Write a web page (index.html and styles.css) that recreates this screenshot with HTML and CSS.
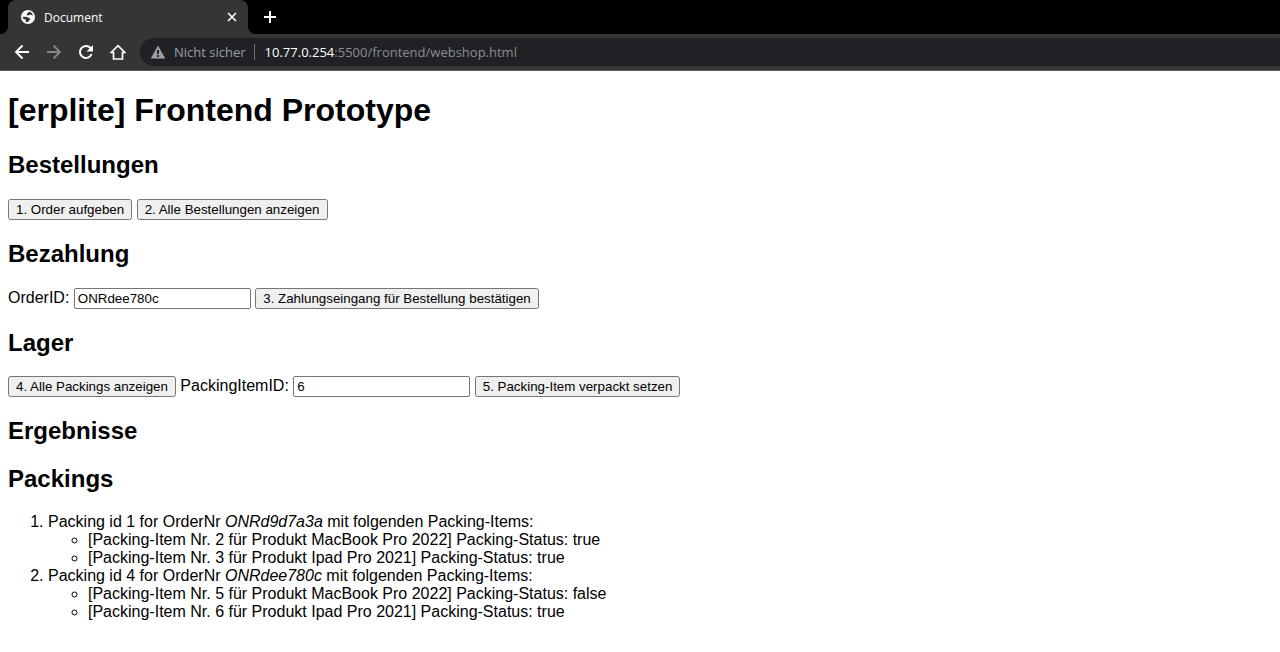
FILE: index.html
```
<!DOCTYPE html>
<html lang="de">
<head>
<meta charset="utf-8">
<title>Document</title>
<link rel="stylesheet" href="styles.css">
</head>
<body>
<header class="browser">
  <div class="tabs">
    <div class="tab">
      <svg class="icon" viewBox="0 0 16 16" width="16" height="16" aria-hidden="true"><circle cx="8" cy="8" r="7" fill="#fff"/><path d="M8.500 2.800C10.500 2.600 12.400 4 13 6.200C11.600 6.600 11 5.200 9.800 5.800C8.600 6.300 8.200 6.600 7.200 6.200C6.300 5.700 6.800 4.500 7.800 4.300Z" fill="#353535"/><path d="M2.700 8C4.500 7.700 7.500 7.800 8.200 8.600C8.900 9.400 10.200 9.200 10.300 10.300C10.300 11.300 8.900 11.200 8.600 12.200L8 13.200C6.800 13.200 6 12.900 5.600 12.600C6.200 11.200 5.800 10.400 4.600 10.300C3.400 10.200 2.900 9.400 2.700 8Z" fill="#353535"/></svg>
      <span class="tab-title">Document</span>
      <button class="tool" aria-label="Tab schließen"><svg class="icon" viewBox="0 0 16 16" width="16" height="16"><path d="M4 4l8 8M12 4l-8 8" stroke="#fff" stroke-width="1.600"/></svg></button>
    </div>
    <button class="tool new-tab" aria-label="Neuer Tab"><svg class="icon" viewBox="0 0 16 16" width="16" height="16"><path d="M8 2v12M2 8h12" stroke="#fff" stroke-width="2"/></svg></button>
  </div>
  <nav class="toolbar">
    <button class="tool" aria-label="Zurück"><svg class="icon" viewBox="0 0 16 16" width="16" height="16"><path d="M15 8H2M8.500 1.500L2 8l6.500 6.500" fill="none" stroke="#fff" stroke-width="1.800"/></svg></button>
    <button class="tool" aria-label="Vorwärts"><svg class="icon" viewBox="0 0 16 16" width="16" height="16"><path d="M1 8h13M7.500 1.500L14 8l-6.500 6.500" fill="none" stroke="#868686" stroke-width="1.800"/></svg></button>
    <button class="tool" aria-label="Neu laden"><svg class="icon" viewBox="0 0 16 16" width="16" height="16"><path d="M13.600 10A6 6 0 1 1 12.500 4L13 4.600" fill="none" stroke="#fff" stroke-width="2"/><path d="M15 1v6.500H8.500Z" fill="#fff"/></svg></button>
    <button class="tool" aria-label="Startseite"><svg class="icon" viewBox="0 0 16 16" width="16" height="16"><path d="M3.500 8.500H1.200L8 1.600l6.800 6.900H12.500V15h-9Z" fill="none" stroke="#fff" stroke-width="1.700"/></svg></button>
    <div class="address">
      <svg class="icon" viewBox="0 0 16 16" width="16" height="16" aria-hidden="true"><path d="M8 1.500L15.300 14.500H.700Z" fill="#9aa0a6"/><path d="M8 6v4M8 11v2" stroke="#202124" stroke-width="2"/></svg>
      <span class="insecure">Nicht sicher</span>
      <span class="url"><span class="host">10.77.0.254</span>:5500/frontend/webshop.html</span>
    </div>
  </nav>
</header>
<main class="page">
  <h1>[erplite] Frontend Prototype</h1>
  <h2>Bestellungen</h2>
  <button>1. Order aufgeben</button>
  <button>2. Alle Bestellungen anzeigen</button>
  <h2>Bezahlung</h2>
  <label for="order-id">OrderID:</label>
  <input class="field" type="text" id="order-id" value="ONRdee780c">
  <button>3. Zahlungseingang für Bestellung bestätigen</button>
  <h2>Lager</h2>
  <button>4. Alle Packings anzeigen</button>
  <label for="item-id">PackingItemID:</label>
  <input class="field" type="text" id="item-id" value="6">
  <button>5. Packing-Item verpackt setzen</button>
  <h2>Ergebnisse</h2>
  <h2>Packings</h2>
  <ol>
    <li>Packing id 1 for OrderNr <i>ONRd9d7a3a</i> mit folgenden Packing-Items:
      <ul>
        <li>[Packing-Item Nr. 2 für Produkt MacBook Pro 2022] Packing-Status: true</li>
        <li>[Packing-Item Nr. 3 für Produkt Ipad Pro 2021] Packing-Status: true</li>
      </ul>
    </li>
    <li>Packing id 4 for OrderNr <i>ONRdee780c</i> mit folgenden Packing-Items:
      <ul>
        <li>[Packing-Item Nr. 5 für Produkt MacBook Pro 2022] Packing-Status: false</li>
        <li>[Packing-Item Nr. 6 für Produkt Ipad Pro 2021] Packing-Status: true</li>
      </ul>
    </li>
  </ol>
</main>
</body>
</html>
```
FILE: styles.css
```
body {
  margin: 0;
  background: #fff;
  color: #000;
  font-family: "Liberation Sans", Arial, sans-serif;
}

.browser {
  background: #353535;
  border-bottom: 1px solid #5a5a5a;
  font-family: "Open Sans", "Noto Sans", sans-serif;
}

.tabs {
  display: flex;
  align-items: center;
  height: 34px;
  padding-left: 8px;
  background: #000;
}

.tab {
  position: relative;
  display: flex;
  align-items: center;
  gap: 8px;
  box-sizing: border-box;
  width: 240px;
  height: 34px;
  padding: 0 8px 0 12px;
  border-radius: 8px 8px 0 0;
  background: #353535;
  color: #fff;
  font-size: 12px;
}

.tab::before,
.tab::after {
  content: "";
  position: absolute;
  bottom: 0;
  width: 8px;
  height: 8px;
}

.tab::before {
  right: 100%;
  background: radial-gradient(circle at 0 0, #000 8px, #353535 8px);
}

.tab::after {
  left: 100%;
  background: radial-gradient(circle at 100% 0, #000 8px, #353535 8px);
}

.tab-title {
  flex: 1;
}

.tool {
  display: flex;
  padding: 0;
  border: 0;
  background: none;
}

.new-tab {
  margin-left: 14px;
}

.icon {
  display: block;
  flex: none;
}

.toolbar {
  display: flex;
  align-items: center;
  gap: 16px;
  height: 36px;
  padding-left: 14px;
}

.address {
  display: flex;
  align-items: center;
  flex: 1;
  gap: 8px;
  height: 28px;
  margin-left: -2px;
  padding-left: 10px;
  border-radius: 14px 0 0 14px;
  background: #202124;
  color: #9aa0a6;
  font-size: 13px;
  line-height: 16px;
}

.insecure {
  padding-right: 8px;
  border-right: 1px solid #6b6e72;
}

.host {
  color: #fff;
}

.url {
  padding-left: 2px;
  color: #8b8e92;
}

.page {
  display: flow-root;
  padding: 0 8px;
}

.page button,
.field {
  font-family: inherit;
}

.field {
  box-sizing: border-box;
  width: 177px;
}
```
